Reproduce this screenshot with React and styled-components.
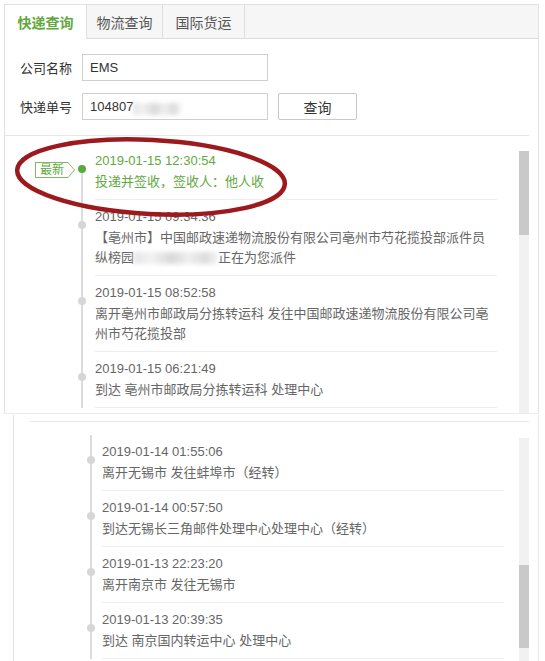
import React from 'react'
import styled, { createGlobalStyle } from 'styled-components'

const GREEN = '#62a83e'

const GlobalStyle = createGlobalStyle`
  html, body {
    margin: 0;
    padding: 0;
    background: #fff;
  }
  body {
    font-family: "Liberation Sans", "Noto Sans CJK SC", sans-serif;
    font-size: 13px;
    color: #666;
  }
  * {
    box-sizing: border-box;
  }
  ul {
    margin: 0;
    padding: 0;
    list-style: none;
  }
`

// built lazily so the styled components below exist by the time it runs
const getTopEvents = () => [
    { date: '2019-01-15 12:30:54', text: '投递并签收，签收人：他人收', latest: true },
    {
        date: '2019-01-15 09:34:36',
        text: (
            <>
                <span>【亳州市】中国邮政速递物流股份有限公司亳州市芍花揽投部派件员</span>
                <span>纵榜园</span>
                <Smudge $w={84} />
                <span>正在为您派件</span>
            </>
        ),
    },
    {
        date: '2019-01-15 08:52:58',
        text: '离开亳州市邮政局分拣转运科 发往中国邮政速递物流股份有限公司亳州市芍花揽投部',
    },
    { date: '2019-01-15 06:21:49', text: '到达 亳州市邮政局分拣转运科 处理中心' },
]

const bottomEvents = [
    { date: '2019-01-14 01:55:06', text: '离开无锡市 发往蚌埠市（经转）' },
    { date: '2019-01-14 00:57:50', text: '到达无锡长三角邮件处理中心处理中心（经转）' },
    { date: '2019-01-13 22:23:20', text: '离开南京市 发往无锡市' },
    { date: '2019-01-13 20:39:35', text: '到达 南京国内转运中心 处理中心' },
]

function Timeline({ events, rail }) {
    return (
        <Events>
            {events.map((e, i) => (
                <Event key={e.date} $rail={rail} $first={i === 0 && e.latest} $latest={e.latest}>
                    {e.latest && <NewTag>最新</NewTag>}
                    <EventDate>{e.date}</EventDate>
                    <EventText>{e.text}</EventText>
                </Event>
            ))}
        </Events>
    )
}

function App() {
    return (
        <Page>
            <GlobalStyle />
            <TopShot>
                <TabBar>
                    <Tab $active $w={82}>快递查询</Tab>
                    <Tab $w={76}>物流查询</Tab>
                    <Tab $w={82}>国际货运</Tab>
                </TabBar>
                <QueryForm>
                    <FormRow>
                        <Label>公司名称</Label>
                        <Field>EMS</Field>
                    </FormRow>
                    <FormRow>
                        <Label>快递单号</Label>
                        <Field>
                            104807
                            <Smudge $w={48} />
                        </Field>
                        <QueryButton>查询</QueryButton>
                    </FormRow>
                </QueryForm>
                <Divider />
                <ListArea $left={90} $top={8}>
                    <Timeline events={getTopEvents()} rail={13} />
                    <ScrollTrack $top={7}>
                        <ScrollThumb $top={0} $h={84} />
                    </ScrollTrack>
                </ListArea>
            </TopShot>
            <BottomShot>
                <Divider $left={16} />
                <ListArea $left={88} $top={13}>
                    <Timeline events={bottomEvents} rail={11} />
                    <ScrollTrack $top={3}>
                        <ScrollThumb $top={127} $h={83} />
                    </ScrollTrack>
                </ListArea>
            </BottomShot>
            <Annotation width="545" height="661" viewBox="0 0 545 661">
                <ellipse
                    cx="151"
                    cy="177"
                    rx="134"
                    ry="37"
                    transform="rotate(3 151 177)"
                    fill="none"
                    stroke="#9c1a1e"
                    strokeWidth="4.5"
                />
            </Annotation>
        </Page>
    )
}

export default App

const Page = styled.div`
    position: relative;
    width: 545px;
    height: 661px;
    overflow: hidden;
    display: flex;
    flex-direction: column;
`

const TopShot = styled.section`
    margin: 4px 0 0 4px;
    width: 535px;
    height: 410px;
    flex-shrink: 0;
    border: 1px solid #e2e2e2;
    border-bottom-color: #ececec;
    display: flex;
    flex-direction: column;
    overflow: hidden;
`

const TabBar = styled.div`
    display: flex;
    height: 34px;
    flex-shrink: 0;
    background: #f6f6f6;
    border-bottom: 1px solid #dedede;
`

const Tab = styled.div`
    width: ${(p) => p.$w}px;
    display: flex;
    align-items: center;
    justify-content: center;
    border-right: 1px solid #dedede;
    font-size: 14px;
    color: ${(p) => (p.$active ? GREEN : '#555')};
    font-weight: ${(p) => (p.$active ? 700 : 400)};
    background: ${(p) => (p.$active ? '#fff' : 'transparent')};
    margin-bottom: ${(p) => (p.$active ? '-1px' : '0')};
`

const QueryForm = styled.div`
    display: flex;
    flex-direction: column;
    gap: 12px;
    padding: 15px 0 15px 15px;
`

const FormRow = styled.div`
    display: flex;
    align-items: center;
    gap: 10px;
`

const Label = styled.span`
    width: 52px;
    font-size: 13px;
    color: #333;
`

const Field = styled.div`
    width: 186px;
    height: 27px;
    display: flex;
    align-items: center;
    padding: 0 7px;
    border: 1px solid #cfcfcf;
    font-size: 13px;
    color: #333;
    white-space: nowrap;
`

const QueryButton = styled.button`
    width: 79px;
    height: 27px;
    border: 1px solid #c9c9c9;
    border-radius: 2px;
    background: #fff;
    font-family: inherit;
    font-size: 14px;
    color: #333;
    padding: 0;
`

// privacy blur over part of a number / name
const Smudge = styled.span`
    display: inline-block;
    width: ${(p) => p.$w}px;
    height: 12px;
    margin-top: 4px;
    vertical-align: top;
    background: linear-gradient(
        90deg,
        #e4e4e4 0%,
        #f2f2f2 20%,
        #d9d9d9 45%,
        #efefef 65%,
        #dcdcdc 85%,
        #f4f4f4 100%
    );
    filter: blur(2px);
`

const Divider = styled.div`
    height: 1px;
    flex-shrink: 0;
    background: #e6e6e6;
    margin: 0 9px 0 ${(p) => p.$left || 0}px;
`

const ListArea = styled.div`
    flex: 1;
    display: flex;
    padding: ${(p) => p.$top}px 9px 0 ${(p) => p.$left}px;
    overflow: hidden;
`

const Events = styled.ul`
    width: 402px;
    flex-shrink: 0;
`

const Event = styled.li`
    position: relative;
    padding: 7px 0;
    border-bottom: 1px solid #eeeeee;
    color: ${(p) => (p.$latest ? GREEN : '#666')};

    &::before {
        content: '';
        position: absolute;
        left: ${(p) => -(p.$rail + 1)}px;
        top: ${(p) => (p.$first ? '25px' : '0')};
        bottom: -1px;
        width: 2px;
        background: #dcdcdc;
    }

    &::after {
        content: '';
        position: absolute;
        left: ${(p) => -(p.$rail + 4)}px;
        top: 21px;
        width: 8px;
        height: 8px;
        border-radius: 50%;
        background: ${(p) => (p.$latest ? '#5aab3a' : '#d6d6d6')};
    }
`

const EventDate = styled.div`
    line-height: 20px;
    margin-bottom: 1px;
    font-size: 13px;
`

const EventText = styled.div`
    line-height: 20px;
    font-size: 13px;
`

const NewTag = styled.span`
    position: absolute;
    left: -60px;
    top: 18px;
    height: 16px;
    padding: 0 4px;
    border: 1px solid #7db862;
    border-right: none;
    background: #fff;
    color: ${GREEN};
    font-size: 12px;
    line-height: 14px;

    &::before {
        content: '';
        position: absolute;
        right: -7px;
        top: -1px;
        border-top: 8px solid transparent;
        border-bottom: 8px solid transparent;
        border-left: 7px solid #7db862;
    }

    &::after {
        content: '';
        position: absolute;
        right: -6px;
        top: 0;
        border-top: 7px solid transparent;
        border-bottom: 7px solid transparent;
        border-left: 6px solid #fff;
    }
`

const ScrollTrack = styled.div`
    margin: ${(p) => p.$top}px 0 0 auto;
    width: 10px;
    flex-shrink: 0;
    background: #f1f1f1;
`

const ScrollThumb = styled.div`
    margin-top: ${(p) => p.$top}px;
    height: ${(p) => p.$h}px;
    background: #c9c9c9;
`

const BottomShot = styled.section`
    margin: 1px 0 0 13px;
    width: 526px;
    flex: 1;
    padding-top: 6px;
    border-left: 1px solid #e2e2e2;
    border-right: 1px solid #e8e8e8;
    display: flex;
    flex-direction: column;
    overflow: hidden;
`

const Annotation = styled.svg`
    position: absolute;
    top: 0;
    left: 0;
    pointer-events: none;
`
